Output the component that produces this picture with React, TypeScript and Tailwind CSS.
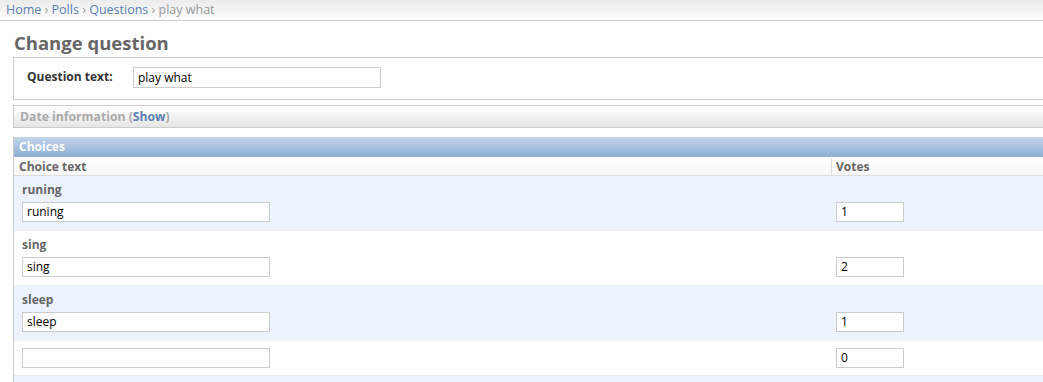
import React from "react";

const font = { fontFamily: '"Open Sans", "DejaVu Sans", sans-serif' };

function Row({
  label,
  text,
  votes,
  blue,
}: {
  label?: string;
  text: string;
  votes: string;
  blue: boolean;
}) {
  return (
    <div
      className={`flex border-b border-[#eeeeee] ${blue ? "bg-[#edf3fe]" : "bg-white"} ${
        label ? "h-[55px]" : "h-[35px]"
      }`}
    >
      <div className="w-[818px] pl-[8px] flex flex-col">
        {label ? (
          <div className="h-[26px] pt-[6px] text-[12px] leading-[16px] font-bold text-[#666]">{label}</div>
        ) : (
          <div className="h-[7px]" />
        )}
        <div className="h-[20px] w-[248px] border border-[#ccc] bg-white text-[12px] leading-[18px] px-[4px] text-black">
          {text}
        </div>
      </div>
      <div className="pl-[4px] flex flex-col">
        {label ? <div className="h-[26px]" /> : <div className="h-[7px]" />}
        <div className="h-[20px] w-[68px] border border-[#ccc] bg-white text-[12px] leading-[18px] px-[4px] text-black">
          {votes}
        </div>
      </div>
    </div>
  );
}

export default function App() {
  return (
    <div className="w-[1043px] h-[382px] overflow-hidden bg-white" style={font}>
      <div className="w-[1100px]">
        <div className="h-[21px] border-b border-[#ccc] bg-gradient-to-b from-[#ececec] to-[#fcfcfc] pl-[6px] pt-[2px] text-[12.5px] leading-[16px] text-[#999]">
          <span className="text-[#5b80b2]">Home</span> › <span className="text-[#5b80b2]">Polls</span> ›{" "}
          <span className="text-[#5b80b2]">Questions</span> › play what
        </div>
        <div className="pl-[13px]">
          <h1 className="pt-[9px] pl-[1px] h-[36px] text-[18.5px] leading-[26px] font-bold text-[#666]">
            Change question
          </h1>
          <div className="border border-[#ccc] h-[43px] flex items-start pt-[9px] pl-[13px]">
            <div className="w-[106px] pt-[2px] text-[12px] leading-[16px] font-bold text-[#333]">Question text:</div>
            <div className="h-[21px] w-[248px] border border-[#ccc] bg-white text-[12px] leading-[19px] px-[4px] text-black">
              play what
            </div>
          </div>
          <div className="mt-[5px] h-[23px] border border-[#ccc] bg-gradient-to-b from-[#ffffff] to-[#e6e6e6] pl-[6px] pt-[2px] text-[12.2px] leading-[17px] font-bold text-[#aaa]">
            Date information (<span className="text-[#5b80b2]">Show</span>)
          </div>
          <div className="mt-[9px] border-l border-[#ccc]">
            <div className="h-[20px] bg-gradient-to-b from-[#c3d6eb] to-[#8dadd3] pl-[5px] pt-[1px] text-[12px] leading-[17px] font-bold text-white">
              Choices
            </div>
            <div className="h-[19px] pt-[1px] flex border-b border-[#ddd] bg-gradient-to-b from-white to-[#f6f6f6] text-[12px] leading-[17px] font-bold text-[#666]">
              <div className="w-[818px] pl-[5px] border-r border-[#ddd]">Choice text</div>
              <div className="pl-[4px]">Votes</div>
            </div>
            <Row label="runing" text="runing" votes="1" blue />
            <Row label="sing" text="sing" votes="2" blue={false} />
            <Row label="sleep" text="sleep" votes="1" blue />
            <Row text="" votes="0" blue={false} />
            <div className="h-[20px] bg-[#edf3fe]" />
          </div>
        </div>
      </div>
    </div>
  );
}
